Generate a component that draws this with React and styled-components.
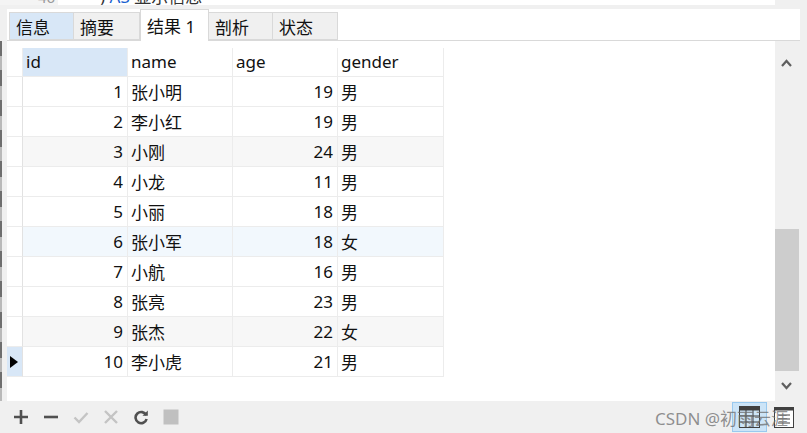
import React from "react";
import styled, { createGlobalStyle } from "styled-components";

const GlobalStyle = createGlobalStyle`
  html, body {
    margin: 0;
    padding: 0;
    background: #f0f0f0;
    overflow: hidden;
  }
  * { box-sizing: border-box; }
`;

const FONT = `"Noto Sans", "Noto Sans CJK SC", sans-serif`;

const rows = [
  { id: 1, name: "张小明", age: 19, gender: "男" },
  { id: 2, name: "李小红", age: 19, gender: "男" },
  { id: 3, name: "小刚", age: 24, gender: "男", tone: "gray" },
  { id: 4, name: "小龙", age: 11, gender: "男" },
  { id: 5, name: "小丽", age: 18, gender: "男" },
  { id: 6, name: "张小军", age: 18, gender: "女", tone: "blue" },
  { id: 7, name: "小航", age: 16, gender: "男" },
  { id: 8, name: "张亮", age: 23, gender: "男" },
  { id: 9, name: "张杰", age: 22, gender: "女", tone: "gray" },
  { id: 10, name: "李小虎", age: 21, gender: "男", current: true },
];

const tabs = [
  { label: "信息", state: "hover" },
  { label: "摘要" },
  { label: "结果 1", state: "active" },
  { label: "剖析" },
  { label: "状态" },
];

const toneBg = { gray: "#f7f7f7", blue: "#f2f8fd" };

const Page = styled.div`
  width: 807px;
  height: 433px;
  display: flex;
  flex-direction: column;
  font-family: ${FONT};
  position: relative;
`;

const EditorStrip = styled.div`
  height: 5px;
  display: flex;
  overflow: hidden;
`;

const Gutter = styled.div`
  width: 58px;
  background: #f4f4f4;
  color: #9a9a9a;
  font-size: 15px;
  line-height: 1;
  padding-left: 38px;
  margin-top: -10px;
`;

const CodeLine = styled.div`
  width: 717px;
  background: #fff;
  font-size: 17px;
  line-height: 1;
  margin-top: -12px;
  padding-left: 42px;
  color: #333;
  white-space: nowrap;

  b {
    color: #1a5fd0;
    font-weight: normal;
  }
`;

const TabBar = styled.div`
  margin-top: 4px;
  height: 32px;
  margin-left: 7px;
  width: 793px;
  background: #fff;
  border-bottom: 1px solid #d9d9d9;
  display: flex;
  align-items: flex-end;
  padding-left: 2px;
`;

const Tab = styled.div`
  width: ${(p) => p.$w}px;
  height: ${(p) => (p.$state === "active" ? 32 : 28)}px;
  margin-bottom: ${(p) => (p.$state === "active" ? -1 : 0)}px;
  background: ${(p) =>
    p.$state === "active" ? "#fff" : p.$state === "hover" ? "#d8e7f7" : "#f0f0f0"};
  border: 1px solid #d9d9d9;
  border-bottom: ${(p) => (p.$state === "active" ? "none" : "1px solid #d9d9d9")};
  border-left: ${(p) => (p.$first || p.$state === "active" ? "1px solid #d9d9d9" : "none")};
  font-size: 17px;
  color: #111;
  display: flex;
  align-items: center;
  padding-left: 6px;
  padding-top: ${(p) => (p.$state === "active" ? 0 : 1)}px;
`;

const Main = styled.div`
  flex: 1;
  display: flex;
  min-height: 0;
`;

const LeftEdge = styled.div`
  width: 7px;
  border-left: 2px solid transparent;
  border-image: repeating-linear-gradient(
      180deg,
      #6e6e6e 0 16px,
      #b9b9b9 16px 30px
    )
    1;
`;

const GridArea = styled.div`
  width: 768px;
  background: #fff;
  padding-top: 7px;
`;

const Table = styled.div`
  display: grid;
  grid-template-columns: 16px 105px 105px 105px 106px;
  width: 437px;
`;

const Cell = styled.div`
  height: 30px;
  border-right: 1px solid #ececec;
  border-bottom: 1px solid #ececec;
  font-size: 17px;
  color: #111;
  display: flex;
  align-items: center;
  justify-content: ${(p) => (p.$right ? "flex-end" : "flex-start")};
  padding: 0 4px 1px 3px;
  background: ${(p) => p.$bg || "transparent"};
  white-space: nowrap;
`;

const HeadCell = styled(Cell)`
  height: 29px;
  background: ${(p) => (p.$selected ? "#d8e7f7" : "#fff")};
  border-bottom: 1px solid #ececec;
`;

const Indicator = styled(Cell)`
  padding: 0 0 0 3px;
  background: ${(p) => (p.$current ? "#d8e7f7" : "#fff")};
  border-right: 1px solid #e2e2e2;
`;

const Pointer = styled.span`
  width: 0;
  height: 0;
  border-top: 6px solid transparent;
  border-bottom: 6px solid transparent;
  border-left: 8px solid #000;
`;

const ScrollBar = styled.div`
  width: 25px;
  display: flex;
  flex-direction: column;
  align-items: stretch;
  padding-top: 7px;
`;

const ScrollArrow = styled.div`
  height: 30px;
  display: flex;
  align-items: center;
  justify-content: center;
  padding-right: 2px;
`;

const Track = styled.div`
  flex: 1;
  display: flex;
  flex-direction: column;
  justify-content: flex-end;
  padding-right: 1px;
`;

const Thumb = styled.div`
  height: 142px;
  background: #cdcdcd;
`;

const Toolbar = styled.div`
  height: 32px;
  display: flex;
  align-items: center;
  padding-left: 13px;
  gap: 14px;
  position: relative;
`;

const ToolIcon = styled.svg`
  width: 16px;
  height: 16px;
  display: block;
`;

const ViewButtons = styled.div`
  position: absolute;
  right: 12px;
  top: 0;
  height: 32px;
  display: flex;
  align-items: center;
  gap: 6px;
`;

const ViewBtn = styled.div`
  width: ${(p) => (p.$active ? 35 : 22)}px;
  height: 30px;
  display: flex;
  align-items: center;
  justify-content: center;
  background: ${(p) => (p.$active ? "#cce4f7" : "transparent")};
  border: 1px solid ${(p) => (p.$active ? "#99c9ef" : "transparent")};
`;

const Watermark = styled.div`
  position: absolute;
  left: 655px;
  top: 4px;
  font-size: 17px;
  color: rgba(110, 110, 110, 0.75);
  white-space: nowrap;
  pointer-events: none;
  z-index: 2;
`;

const Chevron = ({ up }) => (
  <svg width="11" height="8" viewBox="0 0 11 8">
    <path
      d={up ? "M1 7 L5.5 2 L10 7" : "M1 1 L5.5 6 L10 1"}
      fill="none"
      stroke="#5f5f5f"
      strokeWidth="2.2"
    />
  </svg>
);

const App = () => {
  return (
    <>
      <GlobalStyle />
      <Page>
        <EditorStrip>
          <Gutter>46</Gutter>
          <CodeLine>
            ) <b>AS</b> 显示信息
          </CodeLine>
        </EditorStrip>

        <TabBar>
          {tabs.map((t, i) => (
            <Tab
              key={t.label}
              $state={t.state}
              $first={i === 0}
              $w={[65, 66, 69, 64, 65][i]}
            >
              {t.label}
            </Tab>
          ))}
        </TabBar>

        <Main>
          <LeftEdge />
          <GridArea>
            <Table>
              <HeadCell />
              <HeadCell $selected>id</HeadCell>
              <HeadCell>name</HeadCell>
              <HeadCell>age</HeadCell>
              <HeadCell>gender</HeadCell>
              {rows.map((r) => (
                <React.Fragment key={r.id}>
                  <Indicator $current={r.current}>
                    {r.current && <Pointer />}
                  </Indicator>
                  <Cell $right $bg={toneBg[r.tone]}>
                    {r.id}
                  </Cell>
                  <Cell $bg={toneBg[r.tone]}>{r.name}</Cell>
                  <Cell $right $bg={toneBg[r.tone]}>
                    {r.age}
                  </Cell>
                  <Cell $bg={toneBg[r.tone]}>{r.gender}</Cell>
                </React.Fragment>
              ))}
            </Table>
          </GridArea>
          <ScrollBar>
            <ScrollArrow>
              <Chevron up />
            </ScrollArrow>
            <Track>
              <Thumb />
            </Track>
            <ScrollArrow>
              <Chevron />
            </ScrollArrow>
          </ScrollBar>
        </Main>

        <Toolbar>
          <ToolIcon viewBox="0 0 16 16">
            <path d="M8 1v14M1 8h14" stroke="#505050" strokeWidth="2.6" />
          </ToolIcon>
          <ToolIcon viewBox="0 0 16 16">
            <path d="M1 8h14" stroke="#505050" strokeWidth="2.6" />
          </ToolIcon>
          <ToolIcon viewBox="0 0 16 16">
            <path d="M1.5 8.5l4.5 4.5 8.5-9" fill="none" stroke="#c4c4c4" strokeWidth="2.4" />
          </ToolIcon>
          <ToolIcon viewBox="0 0 16 16">
            <path d="M2 2l12 12M14 2L2 14" stroke="#c4c4c4" strokeWidth="2.4" />
          </ToolIcon>
          <ToolIcon viewBox="0 0 16 16">
            <path
              d="M13.2 6.2A5.6 5.6 0 1 0 13.6 10"
              fill="none"
              stroke="#505050"
              strokeWidth="2.6"
            />
            <path d="M9.5 6.8h5.3V1.5z" fill="#505050" />
          </ToolIcon>
          <ToolIcon viewBox="0 0 16 16">
            <rect x="0.5" y="0.5" width="15" height="15" fill="#c0c0c0" />
          </ToolIcon>

          <Watermark>CSDN @初雨云涯</Watermark>

          <ViewButtons>
            <ViewBtn $active>
              <svg width="21" height="22" viewBox="0 0 21 22">
                <rect x="0.5" y="0.5" width="20" height="21" fill="none" stroke="#404040" />
                <rect x="0.5" y="0.5" width="20" height="4" fill="#404040" />
                <path d="M7 4v18M14 4v18M0 10h21M0 16h21" stroke="#404040" />
              </svg>
            </ViewBtn>
            <ViewBtn>
              <svg width="20" height="21" viewBox="0 0 20 21">
                <rect x="0.5" y="0.5" width="19" height="20" fill="#fff" stroke="#404040" />
                <rect x="0.5" y="0.5" width="19" height="3" fill="#404040" />
                <path d="M4 8h12M4 12h12M4 16h12" stroke="#404040" />
              </svg>
            </ViewBtn>
          </ViewButtons>
        </Toolbar>
      </Page>
    </>
  );
};

export default App;
